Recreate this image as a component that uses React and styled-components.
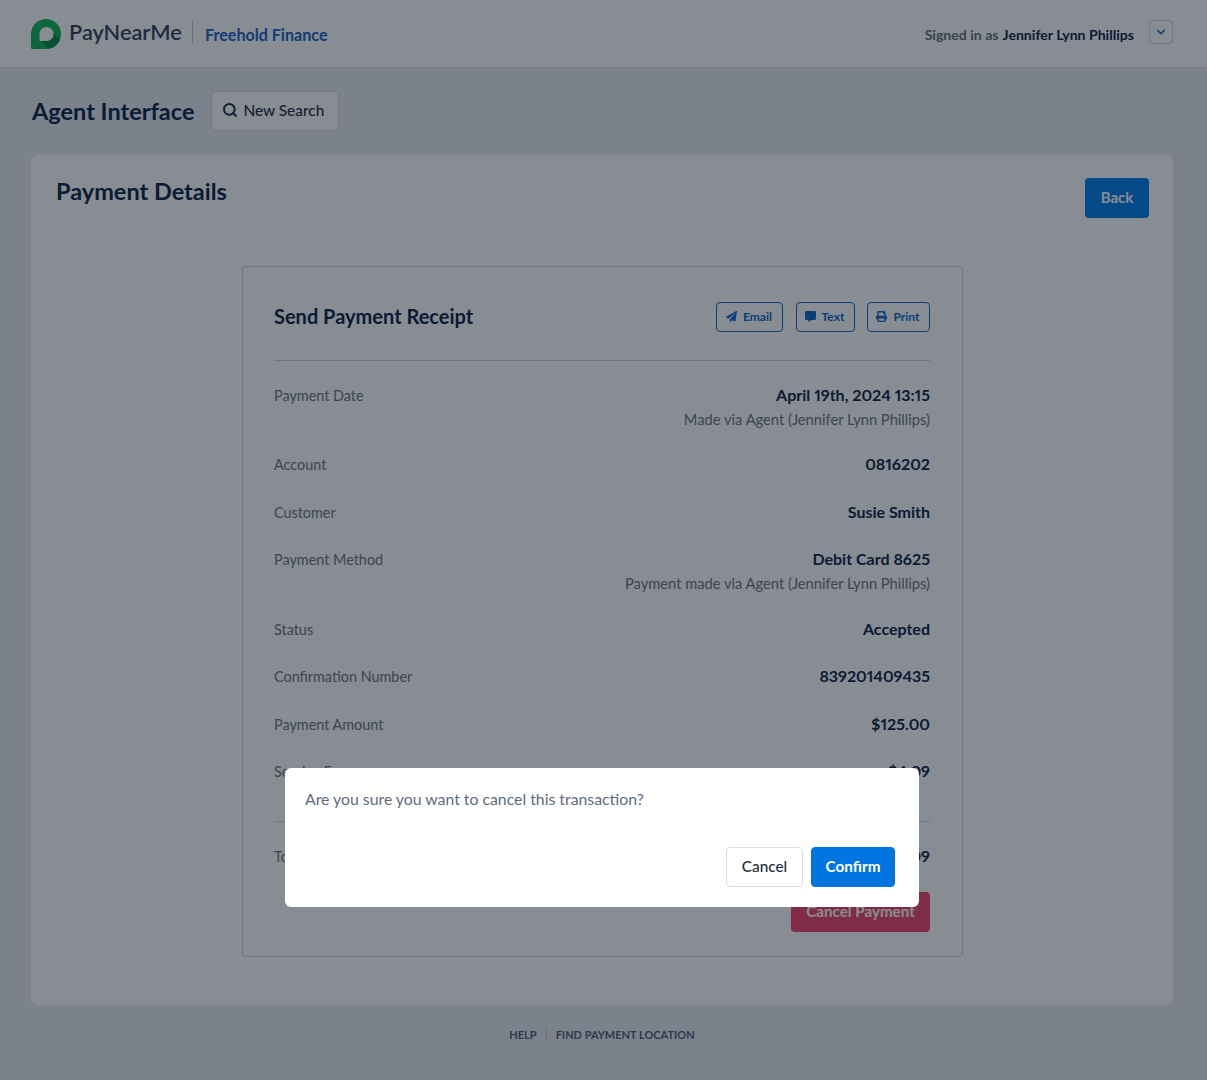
import React from 'react';
import styled, { createGlobalStyle } from 'styled-components';
import { FaPaperPlane, FaCommentAlt, FaPrint } from 'react-icons/fa';
import { Search, ChevronDown } from 'lucide-react';

const GlobalStyle = createGlobalStyle`
  * {
    box-sizing: border-box;
  }
  html, body {
    margin: 0;
    padding: 0;
    background: #e6ebf1;
    font-family: 'Lato', 'Liberation Sans', sans-serif;
    font-variant-numeric: proportional-nums;
    font-feature-settings: 'pnum';
    color: #0e2a47;
  }
`;

const Page = styled.div`
  min-height: 1080px;
  display: flex;
  flex-direction: column;
`;

const Header = styled.header`
  height: 68px;
  background: #fff;
  border-bottom: 1px solid #dfe4ea;
  display: flex;
  align-items: center;
  justify-content: space-between;
  padding: 0 34px 0 31px;
`;

const Brand = styled.div`
  display: flex;
  align-items: center;
`;

const LogoName = styled.span`
  font-size: 21.7px;
  font-weight: 600;
  color: #36475c;
  margin-left: 8px;
  margin-top: -3px;
  width: 112px;
  white-space: nowrap;
`;

const BrandDivider = styled.span`
  width: 1px;
  height: 24px;
  background: #c4cbd4;
  margin: -3px 12px 0 11px;
`;

const Company = styled.span`
  font-size: 16.1px;
  font-weight: 700;
  color: #1769c4;
  margin-top: 2px;
`;

const Account = styled.div`
  display: flex;
  align-items: center;
  font-size: 14.1px;
`;

const SignedIn = styled.span`
  color: #66727f;
  font-weight: 700;
  margin: 2px 4px 0 0;
`;

const UserName = styled.span`
  font-weight: 700;
  color: #0e2a47;
  margin-top: 2px;
`;

const MenuButton = styled.button`
  width: 24px;
  height: 24px;
  margin: -3px 0 0 15px;
  padding: 0;
  display: flex;
  align-items: center;
  justify-content: center;
  background: #fff;
  border: 1px solid #d3d9e0;
  border-radius: 4px;
  color: #1769c4;
`;

const Main = styled.main`
  padding: 23px 34px 0 31px;
`;

const TitleRow = styled.div`
  display: flex;
  align-items: center;
  gap: 17px;
  margin-bottom: 24px;
`;

const PageTitle = styled.h1`
  margin: 0 0 0 1px;
  font-size: 23.5px;
  line-height: 40px;
  font-weight: 700;
  color: #0e2a47;
`;

const SearchButton = styled.button`
  display: flex;
  align-items: center;
  gap: 5px;
  width: 128px;
  height: 40px;
  padding: 0 0 2px 10px;
  font: 500 15.4px 'Lato', sans-serif;
  white-space: nowrap;
  color: #1f3247;
  background: #fff;
  border: 1px solid #d3d9e0;
  border-radius: 4px;
`;

const Panel = styled.section`
  background: #fff;
  border-radius: 6px;
  height: 850px;
  padding: 23px 24px 24px 25px;
`;

const PanelHead = styled.div`
  display: flex;
  justify-content: space-between;
  align-items: flex-start;
  margin-bottom: 48px;
`;

const PanelTitle = styled.h2`
  margin: -3px 0 0;
  font-size: 23.5px;
  line-height: 32px;
  font-weight: 700;
  color: #0e2a47;
`;

const BackButton = styled.button`
  width: 64px;
  height: 40px;
  padding: 0 0 2px;
  font: 700 15px 'Lato', sans-serif;
  color: #fff;
  background: #0580ea;
  border: 0;
  border-radius: 4px;
`;

const Receipt = styled.div`
  width: 721px;
  height: 691px;
  margin-left: 186px;
  padding: 35px 32px 0 31px;
  border: 1px solid #cfd5dc;
  border-radius: 4px;
`;

const ReceiptHead = styled.div`
  display: flex;
  justify-content: space-between;
  align-items: center;
  padding-bottom: 28px;
  border-bottom: 1px solid #cfd5dc;
  margin-bottom: 22px;
`;

const ReceiptTitle = styled.h3`
  margin: -3px 0 0;
  font-size: 20px;
  font-weight: 700;
  color: #0e2a47;
`;

const SendActions = styled.div`
  display: flex;
  gap: 12.5px;
`;

const SendButton = styled.button`
  display: flex;
  align-items: center;
  justify-content: center;
  gap: 6px;
  width: ${(props) => props.$width}px;
  height: 30px;
  padding: 0 1px 1px 0;
  font: 700 12px 'Lato', sans-serif;
  color: #0f6cc6;
  background: transparent;
  border: 1px solid #0f6cc6;
  border-radius: 4px;
`;

const Row = styled.div`
  display: flex;
  justify-content: space-between;
  margin-bottom: 23.5px;
  font-size: 14.7px;
  line-height: 24px;
`;

const Label = styled.span`
  font-size: 14.4px;
  line-height: 26px;
  margin-bottom: -2px;
  color: #6d7986;
`;

const ValueBox = styled.div`
  text-align: right;
`;

const Value = styled.div`
  font-size: 16px;
  font-weight: 700;
  color: #0e2a47;
`;

const Note = styled.div`
  color: #6d7986;
  margin-bottom: -2.2px;
`;

const TotalDivider = styled.hr`
  margin: 38px 0 22px;
  border: 0;
  border-top: 1px solid #cfd5dc;
`;

const CancelRow = styled.div`
  display: flex;
  justify-content: flex-end;
  margin-top: 24px;
`;

const DangerButton = styled.button`
  width: 139px;
  height: 40px;
  padding: 0 0 2px;
  font: 700 15.2px 'Lato', sans-serif;
  color: #fff;
  background: #f2476c;
  border: 0;
  border-radius: 4px;
`;

const Footer = styled.footer`
  display: flex;
  justify-content: center;
  align-items: center;
  margin-top: 23px;
  font-size: 11px;
  font-weight: 700;
  color: #52627a;
`;

const FooterLink = styled.span`
  padding: 0 9px 0 0;
  line-height: 14px;
  & + & {
    border-left: 1px solid #c4cbd4;
    padding: 0 0 0 9px;
  }
`;

const Overlay = styled.div`
  position: fixed;
  inset: 0;
  background: rgba(6, 15, 29, 0.48);
  display: flex;
  justify-content: center;
  align-items: flex-start;
  padding: 768px 3px 0 0;
`;

const Modal = styled.div`
  width: 634px;
  height: 139px;
  padding: 20px 24px 20px 20px;
  background: #fff;
  border-radius: 6px;
  display: flex;
  flex-direction: column;
  justify-content: space-between;
`;

const ModalText = styled.p`
  margin: 0;
  font-size: 15.8px;
  line-height: 22px;
  color: #5f6b7c;
`;

const ModalActions = styled.div`
  display: flex;
  justify-content: flex-end;
  gap: 8px;
`;

const ModalButton = styled.button`
  width: ${(props) => (props.$primary ? 84 : 77)}px;
  height: 40px;
  padding: 0 0 2px;
  font: ${(props) => (props.$primary ? 700 : 500)} 15.3px 'Lato', sans-serif;
  color: ${(props) => (props.$primary ? '#fff' : '#1f2d40')};
  background: ${(props) => (props.$primary ? '#0075e0' : '#fff')};
  border: 1px solid ${(props) => (props.$primary ? '#0075e0' : '#d8dde5')};
  border-radius: 4px;
`;

const Logo = () => (
  <svg width="30" height="30" viewBox="0 0 30 30">
    <path
      d="M15 0C23.3 0 30 6.7 30 15S23.3 30 15 30H1.5A1.5 1.5 0 0 1 0 28.5V15C0 6.7 6.7 0 15 0Z"
      fill="#12b85c"
    />
    <path d="M9 21L17.5 29.8C23 29 27 25.5 29 20.5L21 12Z" fill="#0a9146" />
    <path
      d="M15.5 8C19.4 8 22.5 11.1 22.5 15S19.4 22 15.5 22H8.5V15C8.5 11.1 11.6 8 15.5 8Z"
      fill="#fff"
    />
  </svg>
);

const rows = [
  { label: 'Payment Date', value: 'April 19th, 2024 13:15', note: 'Made via Agent (Jennifer Lynn Phillips)' },
  { label: 'Account', value: '0816202' },
  { label: 'Customer', value: 'Susie Smith' },
  { label: 'Payment Method', value: 'Debit Card 8625', note: 'Payment made via Agent (Jennifer Lynn Phillips)' },
  { label: 'Status', value: 'Accepted' },
  { label: 'Confirmation Number', value: '839201409435' },
  { label: 'Payment Amount', value: '$125.00' },
  { label: 'Service Fee', value: '$4.09' },
];

const DetailRow = ({ label, value, note }) => (
  <Row>
    <Label>{label}</Label>
    <ValueBox>
      <Value>{value}</Value>
      {note && <Note>{note}</Note>}
    </ValueBox>
  </Row>
);

const App = () => (
  <>
    <GlobalStyle />
    <Page>
      <Header>
        <Brand>
          <Logo />
          <LogoName>PayNearMe</LogoName>
          <BrandDivider />
          <Company>Freehold Finance</Company>
        </Brand>
        <Account>
          <SignedIn>Signed in as</SignedIn>
          <UserName>Jennifer Lynn Phillips</UserName>
          <MenuButton>
            <ChevronDown size={14} strokeWidth={2.5} />
          </MenuButton>
        </Account>
      </Header>
      <Main>
        <TitleRow>
          <PageTitle>Agent Interface</PageTitle>
          <SearchButton>
            <Search size={16} strokeWidth={3} />
            New Search
          </SearchButton>
        </TitleRow>
        <Panel>
          <PanelHead>
            <PanelTitle>Payment Details</PanelTitle>
            <BackButton>Back</BackButton>
          </PanelHead>
          <Receipt>
            <ReceiptHead>
              <ReceiptTitle>Send Payment Receipt</ReceiptTitle>
              <SendActions>
                <SendButton $width={67}>
                  <FaPaperPlane size={11} />
                  Email
                </SendButton>
                <SendButton $width={59}>
                  <FaCommentAlt size={11} />
                  Text
                </SendButton>
                <SendButton $width={63}>
                  <FaPrint size={11} />
                  Print
                </SendButton>
              </SendActions>
            </ReceiptHead>
            {rows.map((row) => (
              <DetailRow key={row.label} {...row} />
            ))}
            <TotalDivider />
            <DetailRow label="Total" value="$129.09" />
            <CancelRow>
              <DangerButton>Cancel Payment</DangerButton>
            </CancelRow>
          </Receipt>
        </Panel>
        <Footer>
          <FooterLink>HELP</FooterLink>
          <FooterLink>FIND PAYMENT LOCATION</FooterLink>
        </Footer>
      </Main>
      <Overlay>
        <Modal>
          <ModalText>Are you sure you want to cancel this transaction?</ModalText>
          <ModalActions>
            <ModalButton>Cancel</ModalButton>
            <ModalButton $primary>Confirm</ModalButton>
          </ModalActions>
        </Modal>
      </Overlay>
    </Page>
  </>
);

export default App;
